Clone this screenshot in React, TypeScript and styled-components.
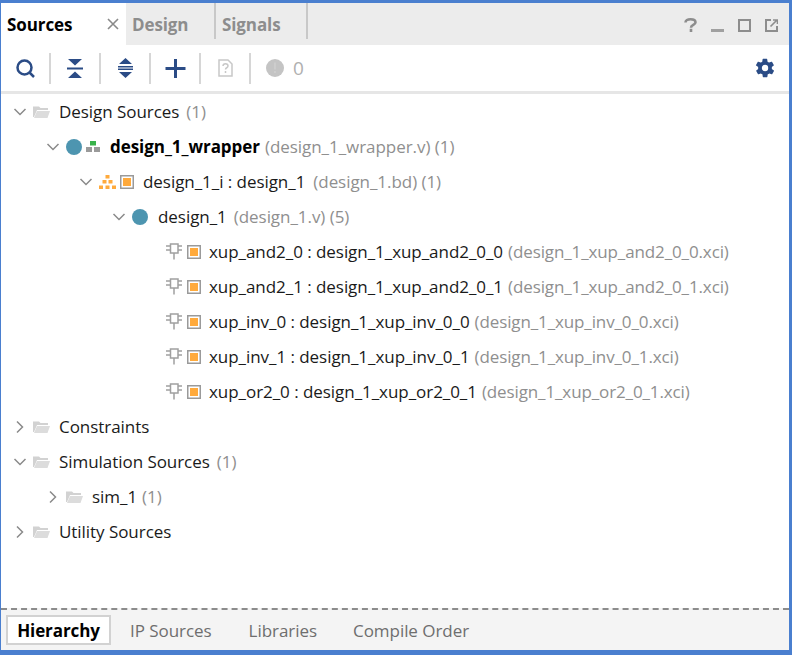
import React from "react";
import styled, { createGlobalStyle } from "styled-components";

const Global = createGlobalStyle`
  html, body { margin: 0; padding: 0; background: #fff; }
  body { font-family: "Open Sans", "Noto Sans", sans-serif; }
  #root { width: 792px; height: 655px; }
`;
const Frame = styled.div`
  width: 792px; height: 655px; box-sizing: border-box;
  border-style: solid; border-color: #4a7fcf;
  border-width: 3px 3px 5px 1px;
  display: flex; flex-direction: column; background: #fff; overflow: hidden;
`;
const TabBar = styled.div`
  height: 42px; flex: none; background: #ececec; display: flex; align-items: stretch;
`;
const ActiveTab = styled.div`
  width: 125px; background: #fff; display: flex; align-items: center; justify-content: space-between;
  padding: 0 7px 0 6px; box-sizing: border-box; font-weight: 700; font-size: 17px; color: #000; letter-spacing: -0.1px;
`;
const Tab = styled.div<{ $w: number }>`
  width: ${p => p.$w}px; box-sizing: border-box; display: flex; align-items: center; padding-left: 6px;
  font-weight: 700; font-size: 17px; color: #8d8d8d; letter-spacing: -0.1px;
  border-right: 2px solid #c8c8c8; margin: 0 0 6px; padding-top: 6px;
`;
const Spacer = styled.div`flex: 1;`;
const WinButtons = styled.div`
  display: flex; align-items: center; gap: 14px; padding: 2px 11px 0 0;
`;
const Toolbar = styled.div`
  height: 46px; flex: none; display: flex; align-items: center; padding: 0 13px 0 0;
  border-bottom: 3px solid #e6e6e6; box-sizing: content-box;
`;
const ToolBtn = styled.div`
  width: 48px; height: 31px; display: flex; align-items: center; justify-content: center; flex: none;
  border-right: 2px solid #d6d6d6; box-sizing: content-box;
`;
const Count = styled.div`
  display: flex; align-items: center; gap: 9px; margin-left: 15px; color: #b0b0b0; font-size: 19px;
`;
const Tree = styled.div`
  flex: 1; display: flex; flex-direction: column;
`;
const Row = styled.div<{ $level: number }>`
  height: 35px; flex: none; display: flex; align-items: center;
  padding-left: ${p => 12 + p.$level * 33}px; font-size: 17px; letter-spacing: -0.05px; color: #1a1a1a; white-space: nowrap;
`;
const Leaf = styled.div`
  height: 35px; flex: none; display: flex; align-items: center; padding-left: 165px;
  font-size: 17px; letter-spacing: -0.05px; color: #1a1a1a; white-space: nowrap;
`;
const Chev = styled.span`
  width: 14px; display: flex; justify-content: center; margin-right: 6px; flex: none;
`;
const IconSlot = styled.span<{ $w: number; $gap?: number }>`
  display: flex; align-items: center; flex: none; width: ${p => p.$w}px; margin-right: ${p => p.$gap ?? 0}px;
`;
const Name = styled.span<{ $bold?: boolean }>`
  font-weight: ${p => (p.$bold ? 700 : 400)};
  color: ${p => (p.$bold ? "#000" : "#1a1a1a")};
`;
const Dim = styled.span<{ $gap?: number; $tight?: boolean }>`
  color: #8f8f8f; margin-left: ${p => p.$gap ?? 5}px;
  letter-spacing: ${p => (p.$tight ? "-0.12px" : "inherit")};
`;
const Bottom = styled.div`
  height: 40px; flex: none; background: #f4f4f4; border-top: 2px dashed #8c8c8c;
  display: flex; align-items: center; padding-left: 5px; font-size: 17px; letter-spacing: -0.05px;
`;
const ActiveBottom = styled.div`
  width: 105px; height: 30px; box-sizing: border-box; background: #fff; border: 2px solid #d2d2d2;
  display: flex; align-items: center; justify-content: center; font-weight: 700; color: #000; font-size: 17px; letter-spacing: -0.1px;
  margin-right: 19px;
`;
const BottomTab = styled.div<{ $mr: number }>`
  color: #6e6e6e; margin-right: ${p => p.$mr}px;
`;

const Chevron = ({ open }: { open?: boolean }) => (
  <svg width="14" height="14" viewBox="0 0 14 14" fill="none" stroke="#8a8a8a" strokeWidth="1.5">
    {open ? <path d="M1.5 4 7 9.5 12.500 4" /> : <path d="M4 1.500 9.500 7 4 12.500" />}
  </svg>
);
const Folder = () => (
  <svg width="17" height="13" viewBox="0 0 17 13">
    <path d="M0 1.500h6l1.500 1.500H15v2H4L1 12H0z" fill="#d2d2d2" />
    <path d="M4 6h13l-2.500 7H1z" fill="#dcdcdc" />
  </svg>
);
const Dot = () => (
  <svg width="16" height="16" viewBox="0 0 16 16"><circle cx="8" cy="8" r="8" fill="#4d95b0" /></svg>
);
const Ip = () => (
  <svg width="14" height="14" viewBox="0 0 14 14">
    <rect x="0.75" y="0.75" width="12.5" height="12.5" fill="#fff" stroke="#9a9a9a" strokeWidth="1.5" />
    <rect x="3" y="3" width="8" height="8" fill="#ffaa3c" />
  </svg>
);
const Wrapper = () => (
  <svg width="15" height="11" viewBox="0 0 15 11">
    <rect x="4" y="0" width="6" height="4.5" fill="#38b24a" />
    <rect x="0" y="6" width="6" height="5" fill="#9a9a9a" />
    <rect x="8" y="6" width="6" height="5" fill="#9a9a9a" />
  </svg>
);
const Hier = () => (
  <svg width="17" height="14" viewBox="0 0 17 14" fill="#ffaa3c">
    <rect x="6.5" y="0" width="4" height="3.5" />
    <rect x="3.5" y="5" width="4" height="3.5" />
    <rect x="9.5" y="5" width="4" height="3.5" />
    <rect x="0" y="10.5" width="4" height="3.5" />
    <rect x="6.5" y="10.5" width="4" height="3.5" />
    <rect x="13" y="10.5" width="4" height="3.5" />
  </svg>
);
const Chip = () => (
  <svg width="16" height="17" viewBox="0 0 16 17" fill="none" stroke="#a0a0a0" strokeWidth="1.5">
    <rect x="4.500" y="1" width="7.500" height="9" />
    <path d="M0 3h4.500M0 7h4.500M12 3h4M12 7h4M8 10v6.500" />
  </svg>
);

const leaves = [
  ["xup_and2_0 : design_1_xup_and2_0_0", "(design_1_xup_and2_0_0.xci)"],
  ["xup_and2_1 : design_1_xup_and2_0_1", "(design_1_xup_and2_0_1.xci)"],
  ["xup_inv_0 : design_1_xup_inv_0_0", "(design_1_xup_inv_0_0.xci)"],
  ["xup_inv_1 : design_1_xup_inv_0_1", "(design_1_xup_inv_0_1.xci)"],
  ["xup_or2_0 : design_1_xup_or2_0_1", "(design_1_xup_or2_0_1.xci)"],
];

const Navy = "#2b4c86";

export default function App() {
  return (
    <Frame>
      <Global />
      <TabBar>
        <ActiveTab>
          <span>Sources</span>
          <svg width="12" height="12" viewBox="0 0 12 12" stroke="#8a8a8a" strokeWidth="1.6"><path d="M1 1l10 10M11 1 1 11" /></svg>
        </ActiveTab>
        <Tab $w={90}>Design</Tab>
        <Tab $w={92}>Signals</Tab>
        <Spacer />
        <WinButtons>
          <svg width="13" height="14" viewBox="0 0 13 14" fill="none" stroke="#8d8d8d" strokeWidth="2.6"><path d="M1.500 4.500C1.500 2.200 3.500 1.300 6.500 1.300s5 1 5 3c0 2.800-4.500 2.500-4.500 5.400" /><path d="M7 10.800V14" /></svg>
          <svg width="13" height="14" viewBox="0 0 13 14"><rect x="0" y="11" width="13" height="3" fill="#a0a0a0" /></svg>
          <svg width="13" height="13" viewBox="0 0 13 13" fill="none" stroke="#8d8d8d" strokeWidth="2"><rect x="1" y="1" width="11" height="11" /></svg>
          <svg width="13" height="13" viewBox="0 0 13 13" fill="none" stroke="#8d8d8d" strokeWidth="2"><path d="M6 1H1v11h11V7" /><path d="M5.500 7.500 12 1M8 1h4.500v4" strokeWidth="1.6" /></svg>
        </WinButtons>
      </TabBar>
      <Toolbar>
        <ToolBtn>
          <svg width="19" height="19" viewBox="0 0 19 19" fill="none" stroke={Navy} strokeWidth="2.5"><circle cx="8.500" cy="8.500" r="7" /><path d="M13.500 13.500 18 18" /></svg>
        </ToolBtn>
        <ToolBtn>
          <svg width="16" height="19" viewBox="0 0 16 19" fill={Navy}><path d="M1 0h14L8 6.500zM0 8.500h16v2H0zM8 12.500 15 19H1z" /></svg>
        </ToolBtn>
        <ToolBtn>
          <svg width="15" height="20" viewBox="0 0 15 20" fill={Navy}><path d="M7.500 0 14 6H1zM0 8h15v1.500H0zM0 10.500h15V12H0zM1 14h13l-6.500 6z" /></svg>
        </ToolBtn>
        <ToolBtn>
          <svg width="21" height="21" viewBox="0 0 21 21" fill={Navy}><path d="M9 1h3v8h8.500v3H12v8H9v-8H.5V9H9z" /></svg>
        </ToolBtn>
        <ToolBtn>
          <svg width="15" height="18" viewBox="0 0 15 18" fill="none" stroke="#c8c8c8" strokeWidth="1.5"><path d="M1 1h9l4 4v12H1z" /><path d="M5 7c0-3 5-3 5 0 0 2-2.500 1.500-2.500 3.500M7.500 12v2" /></svg>
        </ToolBtn>
        <Count>
          <svg width="18" height="18" viewBox="0 0 18 18"><circle cx="9" cy="9" r="9" fill="#c4c4c4" /><path d="M8.200 3.500h1.600v7H8.200zM8.200 12h1.600v2H8.200z" fill="#cfcfcf" /></svg>
          0
        </Count>
        <Spacer />
        <svg width="22" height="22" viewBox="0 0 24 24" fill={Navy}>
          <path fillRule="evenodd" d="M19.400 13c.1-.3.1-.7.1-1s0-.7-.1-1l2.100-1.600c.2-.2.200-.4.100-.6l-2-3.500c-.1-.2-.4-.3-.6-.2l-2.500 1c-.5-.4-1.100-.7-1.700-1l-.4-2.600c0-.3-.2-.5-.5-.5h-4c-.3 0-.5.200-.5.500l-.4 2.600c-.6.300-1.200.6-1.700 1l-2.500-1c-.2-.1-.5 0-.6.200l-2 3.500c-.1.200-.1.400.1.600L4.600 11c-.1.300-.1.700-.1 1s0 .7.100 1l-2.100 1.600c-.2.200-.2.400-.1.600l2 3.500c.1.200.4.300.6.200l2.500-1c.5.400 1.100.7 1.700 1l.4 2.600c0 .3.200.5.500.5h4c.3 0 .5-.2.500-.5l.4-2.600c.6-.3 1.200-.6 1.700-1l2.500 1c.2.100.5 0 .6-.2l2-3.500c.1-.2.100-.4-.1-.6zM12 15.500a3.500 3.500 0 1 1 0-7 3.500 3.500 0 0 1 0 7z" />
        </svg>
      </Toolbar>
      <Tree>
        <Row $level={0}><Chev><Chevron open /></Chev><IconSlot $w={17} $gap={9}><Folder /></IconSlot><Name>Design Sources</Name><Dim $gap={7}>(1)</Dim></Row>
        <Row $level={1}><Chev><Chevron open /></Chev><IconSlot $w={16} $gap={4}><Dot /></IconSlot><IconSlot $w={15} $gap={9}><Wrapper /></IconSlot><Name $bold>design_1_wrapper</Name><Dim>(design_1_wrapper.v) (1)</Dim></Row>
        <Row $level={2}><Chev><Chevron open /></Chev><IconSlot $w={17} $gap={4}><Hier /></IconSlot><IconSlot $w={14} $gap={9}><Ip /></IconSlot><Name>design_1_i : design_1</Name><Dim $gap={8}>(design_1.bd) (1)</Dim></Row>
        <Row $level={3}><Chev><Chevron open /></Chev><IconSlot $w={16} $gap={10}><Dot /></IconSlot><Name>design_1</Name><Dim $gap={7}>(design_1.v) (5)</Dim></Row>
        {leaves.map(([n, d]) => (
          <Leaf key={n}><IconSlot $w={16} $gap={5}><Chip /></IconSlot><IconSlot $w={14} $gap={8}><Ip /></IconSlot><Name>{n}</Name><Dim $tight>{d}</Dim></Leaf>
        ))}
        <Row $level={0}><Chev><Chevron /></Chev><IconSlot $w={17} $gap={9}><Folder /></IconSlot><Name>Constraints</Name></Row>
        <Row $level={0}><Chev><Chevron open /></Chev><IconSlot $w={17} $gap={9}><Folder /></IconSlot><Name>Simulation Sources</Name><Dim $gap={7}>(1)</Dim></Row>
        <Row $level={1}><Chev><Chevron /></Chev><IconSlot $w={17} $gap={9}><Folder /></IconSlot><Name>sim_1</Name><Dim>(1)</Dim></Row>
        <Row $level={0}><Chev><Chevron /></Chev><IconSlot $w={17} $gap={9}><Folder /></IconSlot><Name>Utility Sources</Name></Row>
      </Tree>
      <Bottom>
        <ActiveBottom>Hierarchy</ActiveBottom>
        <BottomTab $mr={37}>IP Sources</BottomTab>
        <BottomTab $mr={36}>Libraries</BottomTab>
        <BottomTab $mr={0}>Compile Order</BottomTab>
      </Bottom>
    </Frame>
  );
}
